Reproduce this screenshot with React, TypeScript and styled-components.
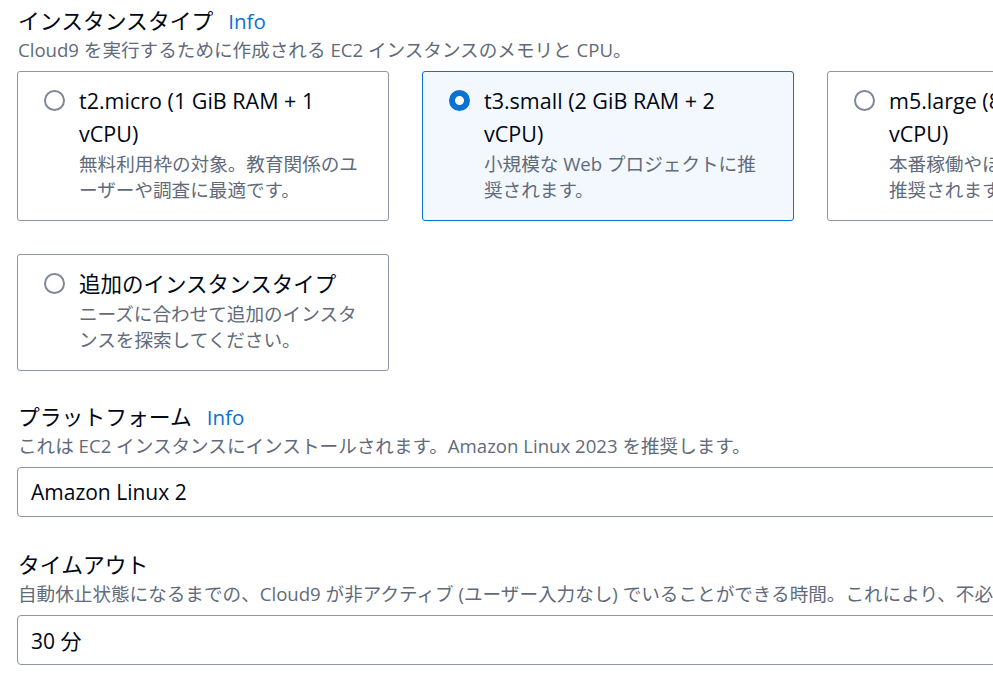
import React from "react";
import styled, { createGlobalStyle } from "styled-components";

const Global = createGlobalStyle`
  html, body { margin: 0; padding: 0; background: #ffffff; overflow: hidden; }
  body {
    font-family: "Open Sans", "Noto Sans CJK JP", sans-serif;
    color: #000716;
  }
`;

const Page = styled.div`
  width: 1182px;
  padding: 7px 0 0 17px;
  display: flex;
  flex-direction: column;
`;

const Field = styled.section<{ $top?: number }>`
  display: flex;
  flex-direction: column;
  margin-top: ${(p) => p.$top ?? 0}px;
`;

const LabelRow = styled.div`
  display: flex;
  align-items: baseline;
  gap: 15px;
  height: 28px;
  line-height: 28px;
  padding-left: 1px;
`;

const Label = styled.span`
  font-size: 21.8px;
  color: #000716;
`;

const InfoLink = styled.a`
  font-size: 20.5px;
  color: #0972d3;
  text-decoration: none;
`;

const Description = styled.div`
  font-size: 18.6px;
  line-height: 26px;
  color: #5f6b7a;
  margin-top: 2px;
  margin-bottom: 8px;
  padding-left: 1px;
  white-space: nowrap;
`;

const CardGrid = styled.div`
  display: grid;
  grid-template-columns: repeat(3, 372px);
  column-gap: 33px;
  row-gap: 33px;
`;

const Card = styled.label<{ $selected?: boolean }>`
  display: flex;
  align-items: flex-start;
  gap: 14px;
  padding: 12px 24px 17px 26px;
  border: 1px solid ${(p) => (p.$selected ? "#0972d3" : "#8d96a3")};
  background: ${(p) => (p.$selected ? "#f2f8fd" : "#ffffff")};
  border-radius: 3px;
  box-sizing: border-box;
`;

const Radio = styled.span<{ $checked?: boolean }>`
  flex: none;
  width: 21px;
  height: 21px;
  margin-top: 6px;
  box-sizing: border-box;
  border-radius: 50%;
  border: ${(p) => (p.$checked ? "6.5px solid #0972d3" : "2px solid #7d8998")};
  background: #ffffff;
`;

const CardBody = styled.div`
  display: flex;
  flex-direction: column;
  min-width: 0;
`;

const CardTitle = styled.div`
  font-size: 21.5px;
  line-height: 33px;
  color: #000716;
`;

const CardDesc = styled.div`
  font-size: 18.6px;
  line-height: 26px;
  color: #5f6b7a;
  margin-top: 1px;
`;

const Input = styled.div`
  height: 50px;
  box-sizing: border-box;
  border: 1px solid #8d96a3;
  border-radius: 4px;
  padding: 0 13px;
  display: flex;
  align-items: center;
  font-size: 21px;
  color: #000716;
`;

type Option = { title: string; desc: string; selected?: boolean };

const options: Option[] = [
  {
    title: "t2.micro (1 GiB RAM + 1 vCPU)",
    desc: "無料利用枠の対象。教育関係のユーザーや調査に最適です。",
  },
  {
    title: "t3.small (2 GiB RAM + 2 vCPU)",
    desc: "小規模な Web プロジェクトに推奨されます。",
    selected: true,
  },
  {
    title: "m5.large (8 GiB RAM + 2 vCPU)",
    desc: "本番稼働やほとんどの汎用開発に推奨されます。",
  },
  {
    title: "追加のインスタンスタイプ",
    desc: "ニーズに合わせて追加のインスタンスを探索してください。",
  },
];

export default function App() {
  return (
    <>
      <Global />
      <Page>
        <Field>
          <LabelRow>
            <Label>インスタンスタイプ</Label>
            <InfoLink>Info</InfoLink>
          </LabelRow>
          <Description>
            Cloud9 を実行するために作成される EC2 インスタンスのメモリと CPU。
          </Description>
          <CardGrid>
            {options.map((o) => (
              <Card key={o.title} $selected={o.selected}>
                <Radio $checked={o.selected} />
                <CardBody>
                  <CardTitle>{o.title}</CardTitle>
                  <CardDesc>{o.desc}</CardDesc>
                </CardBody>
              </Card>
            ))}
          </CardGrid>
        </Field>
        <Field $top={32}>
          <LabelRow>
            <Label>プラットフォーム</Label>
            <InfoLink>Info</InfoLink>
          </LabelRow>
          <Description>
            これは EC2 インスタンスにインストールされます。Amazon Linux 2023 を推奨します。
          </Description>
          <Input>Amazon Linux 2</Input>
        </Field>
        <Field $top={34}>
          <LabelRow>
            <Label>タイムアウト</Label>
          </LabelRow>
          <Description>
            自動休止状態になるまでの、Cloud9 が非アクティブ (ユーザー入力なし) でいることができる時間。これにより、不必要な料金が発生するのを防ぐことができます。
          </Description>
          <Input>30 分</Input>
        </Field>
      </Page>
    </>
  );
}
